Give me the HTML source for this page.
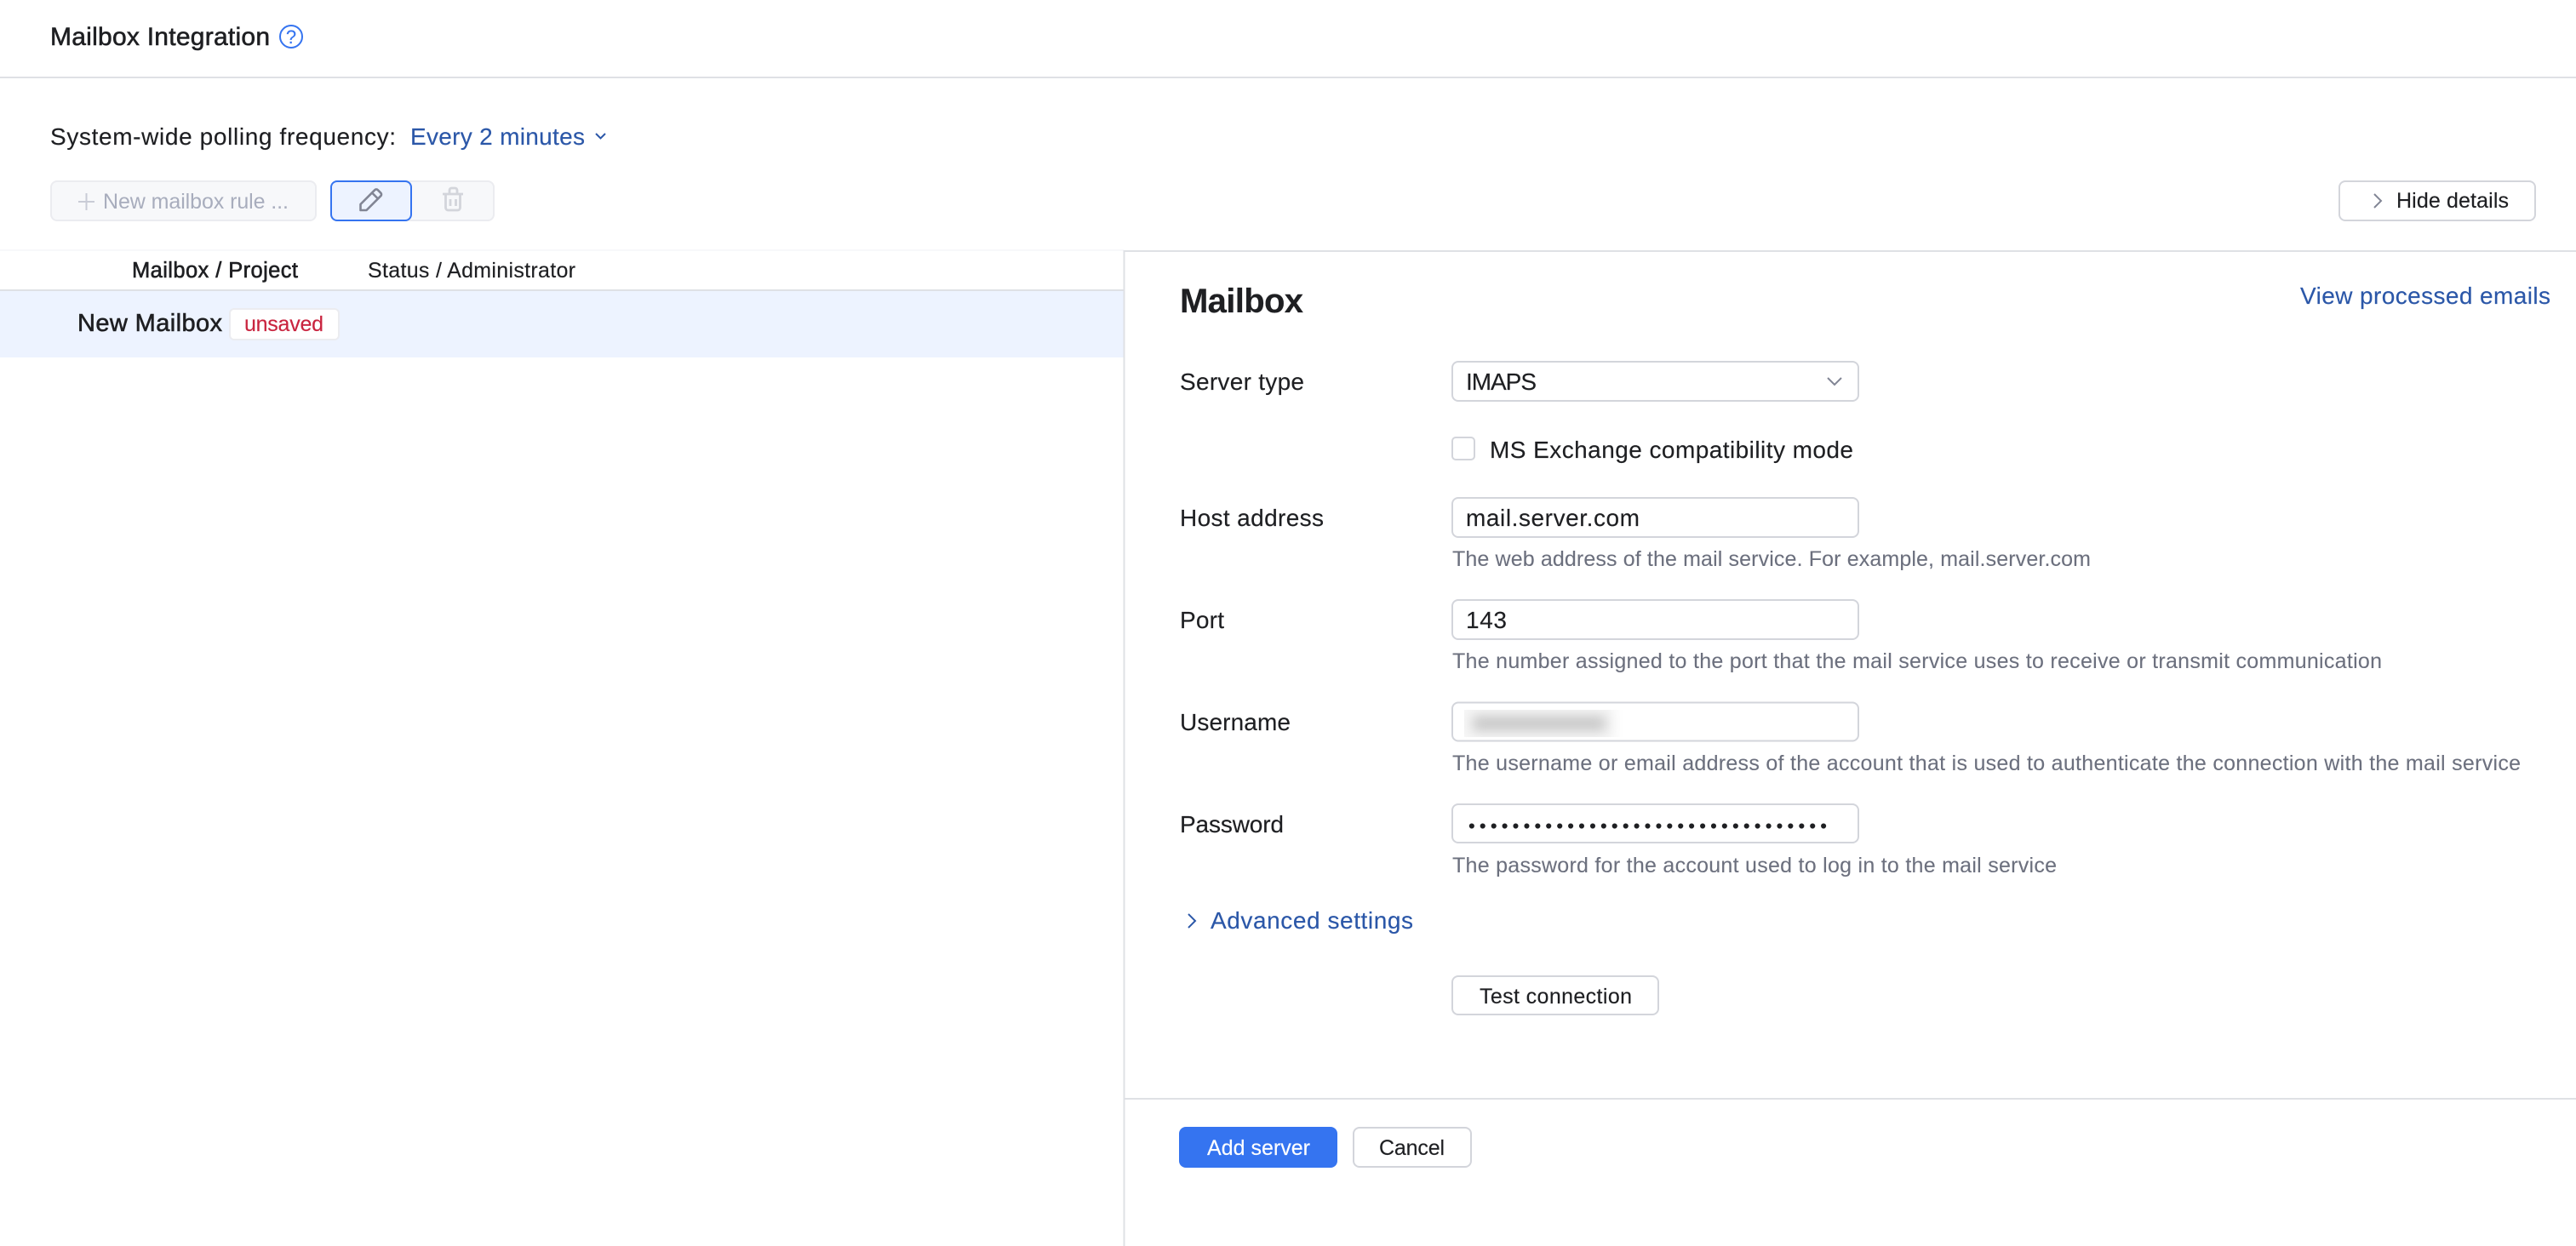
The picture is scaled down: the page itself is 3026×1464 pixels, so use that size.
<!DOCTYPE html>
<html lang="en">
<head>
<meta charset="utf-8">
<title>Mailbox Integration</title>
<style>
html,body{margin:0;padding:0;background:#fff;width:3026px;height:1464px;overflow:hidden}
svg{display:block;position:absolute;left:0;top:0}
text{font-family:"Liberation Sans",sans-serif;font-size:28px;color:#1e1f22;fill:currentColor;stroke:currentColor;stroke-width:.15px;white-space:pre}
.m{stroke-width:.6px}
.h{font-size:25px;color:#6c707e;stroke-width:.1px}
.s{font-size:25px}
.l{color:#2b57a8}
.box{fill:#fff;stroke:#d3d5db;stroke-width:2}
</style>
</head>
<body>
<svg width="3026" height="1464" viewBox="0 0 3026 1464" xmlns="http://www.w3.org/2000/svg">
<defs>
<filter id="b" x="-30%" y="-100%" width="160%" height="300%"><feGaussianBlur stdDeviation="7"/></filter>
<filter id="b2" x="-30%" y="-100%" width="160%" height="300%"><feGaussianBlur stdDeviation="6"/></filter>
<clipPath id="c"><rect x="1720" y="834" width="190" height="32"/></clipPath>
</defs>

<!-- page header -->
<text x="59" y="53" textLength="258" style="font-size:30px" class="m">Mailbox Integration</text>
<circle cx="342" cy="43" r="13" fill="none" stroke="#3574f0" stroke-width="2"/>
<text x="342" y="51" text-anchor="middle" style="font-size:22px;color:#3574f0">?</text>
<rect x="0" y="90" width="3026" height="2" fill="#dfe1e5"/>

<!-- polling -->
<text x="59" y="170" textLength="406">System-wide polling frequency:</text>
<text x="482" y="170" textLength="205" class="l">Every 2 minutes</text>
<path d="M700 157l5.500 5.500 5.500-5.500" fill="none" stroke="#2b57a8" stroke-width="2"/>

<!-- toolbar -->
<rect x="60" y="213" width="311" height="46" rx="7" fill="#f7f8fa" stroke="#ebecf0" stroke-width="2"/>
<path d="M101.500 227v20M92 237h19" stroke="#c9ccd6" stroke-width="2" fill="none"/>
<text x="121" y="245" textLength="218" class="s" style="color:#a8adbd;stroke-width:0">New mailbox rule ...</text>
<rect x="470" y="213" width="110" height="46" rx="7" fill="#f7f8fa" stroke="#ebecf0" stroke-width="2"/>
<rect x="389" y="213" width="94" height="46" rx="7" fill="#edf3ff" stroke="#3574f0" stroke-width="2"/>
<path d="M423.500 247v-7l16.800-16.800a2.500 2.500 0 0 1 3.500 0l3.500 3.500a2.500 2.500 0 0 1 0 3.500L430.500 247zM437 226.500l7 7" fill="none" stroke="#818594" stroke-width="2.600" stroke-linejoin="round"/>
<path d="M520 228h24M528 227v-3.500a2.500 2.500 0 0 1 2.500-2.500h4a2.500 2.500 0 0 1 2.500 2.500v3.500M523.500 228v16a3 3 0 0 0 3 3h11a3 3 0 0 0 3-3v-16M529 234v8M535.500 234v8" fill="none" stroke="#d3d5db" stroke-width="2.800"/>
<rect x="2748" y="213" width="230" height="46" rx="7" class="box"/>
<path d="M2789 228l8 8-8 8" fill="none" stroke="#818594" stroke-width="2"/>
<text x="2815" y="244" textLength="132" class="s">Hide details</text>

<!-- table -->
<rect x="0" y="293" width="1320" height="2" fill="#f7f8fa"/>
<rect x="1320" y="294" width="1706" height="2" fill="#dfe1e5"/>
<text x="155" y="326" textLength="195" class="m" style="font-size:25.500px">Mailbox / Project</text>
<text x="432" y="326" textLength="244" class="s">Status / Administrator</text>
<rect x="0" y="340" width="1320" height="2" fill="#dfe1e5"/>
<rect x="0" y="342" width="1320" height="78" fill="#edf3ff"/>
<text x="91" y="389" textLength="170" style="font-size:29px" class="m">New Mailbox</text>
<rect x="270" y="363" width="128" height="36" rx="5" fill="#fff" stroke="#ebecf0" stroke-width="2"/>
<text x="287" y="389" textLength="93" class="s" style="color:#c9243f">unsaved</text>

<!-- details panel -->
<rect x="1319.500" y="294" width="2" height="1170" fill="#dfe1e5"/>
<text x="1386" y="367" textLength="145" style="font-size:40px;font-weight:700">Mailbox</text>
<text x="2702" y="357" textLength="294" class="l">View processed emails</text>

<text x="1386" y="458" textLength="146">Server type</text>
<rect x="1706" y="425" width="477" height="46" rx="7" class="box"/>
<text x="1722" y="458" textLength="83">IMAPS</text>
<path d="M2147 444l8 8 8-8" fill="none" stroke="#818594" stroke-width="2"/>

<rect x="1706" y="514" width="26" height="26" rx="4" class="box"/>
<text x="1750" y="538" textLength="427">MS Exchange compatibility mode</text>

<text x="1386" y="618" textLength="169">Host address</text>
<rect x="1706" y="585" width="477" height="46" rx="7" class="box"/>
<text x="1722" y="618" textLength="204">mail.server.com</text>
<text x="1706" y="665" textLength="750" class="h">The web address of the mail service. For example, mail.server.com</text>

<text x="1386" y="738" textLength="52">Port</text>
<rect x="1706" y="705" width="477" height="46" rx="7" class="box"/>
<text x="1722" y="738" textLength="48">143</text>
<text x="1706" y="785" textLength="1092" class="h">The number assigned to the port that the mail service uses to receive or transmit communication</text>

<text x="1386" y="858" textLength="130">Username</text>
<rect x="1706" y="825.500" width="477" height="45" rx="7" class="box"/>
<g clip-path="url(#c)">
<rect x="1690" y="820" width="208" height="60" fill="#f6f6f6" filter="url(#b2)"/>
<rect x="1730" y="841" width="156" height="18" fill="#c8c8c8" filter="url(#b)"/>
</g>
<text x="1706" y="905" textLength="1255" class="h">The username or email address of the account that is used to authenticate the connection with the mail service</text>

<text x="1386" y="978" textLength="122">Password</text>
<rect x="1706" y="945" width="477" height="45" rx="7" class="box"/>
<text x="1725" y="978" textLength="421" style="font-size:22px">•••••••••••••••••••••••••••••••••</text>
<text x="1706" y="1025" textLength="710" class="h">The password for the account used to log in to the mail service</text>

<path d="M1396 1074l8 8-8 8" fill="none" stroke="#2b57a8" stroke-width="2"/>
<text x="1422" y="1091" textLength="238" class="l">Advanced settings</text>

<rect x="1706" y="1147" width="242" height="45" rx="7" class="box"/>
<text x="1738" y="1179" textLength="179" class="s">Test connection</text>

<rect x="1320" y="1290" width="1706" height="2" fill="#dfe1e5"/>
<rect x="1385" y="1324" width="186" height="48" rx="8" fill="#3574f0"/>
<text x="1418" y="1357" textLength="121" class="s" style="color:#fff">Add server</text>
<rect x="1590" y="1325" width="138" height="46" rx="7" class="box"/>
<text x="1620" y="1357" textLength="77" class="s">Cancel</text>
</svg>
</body>
</html>
